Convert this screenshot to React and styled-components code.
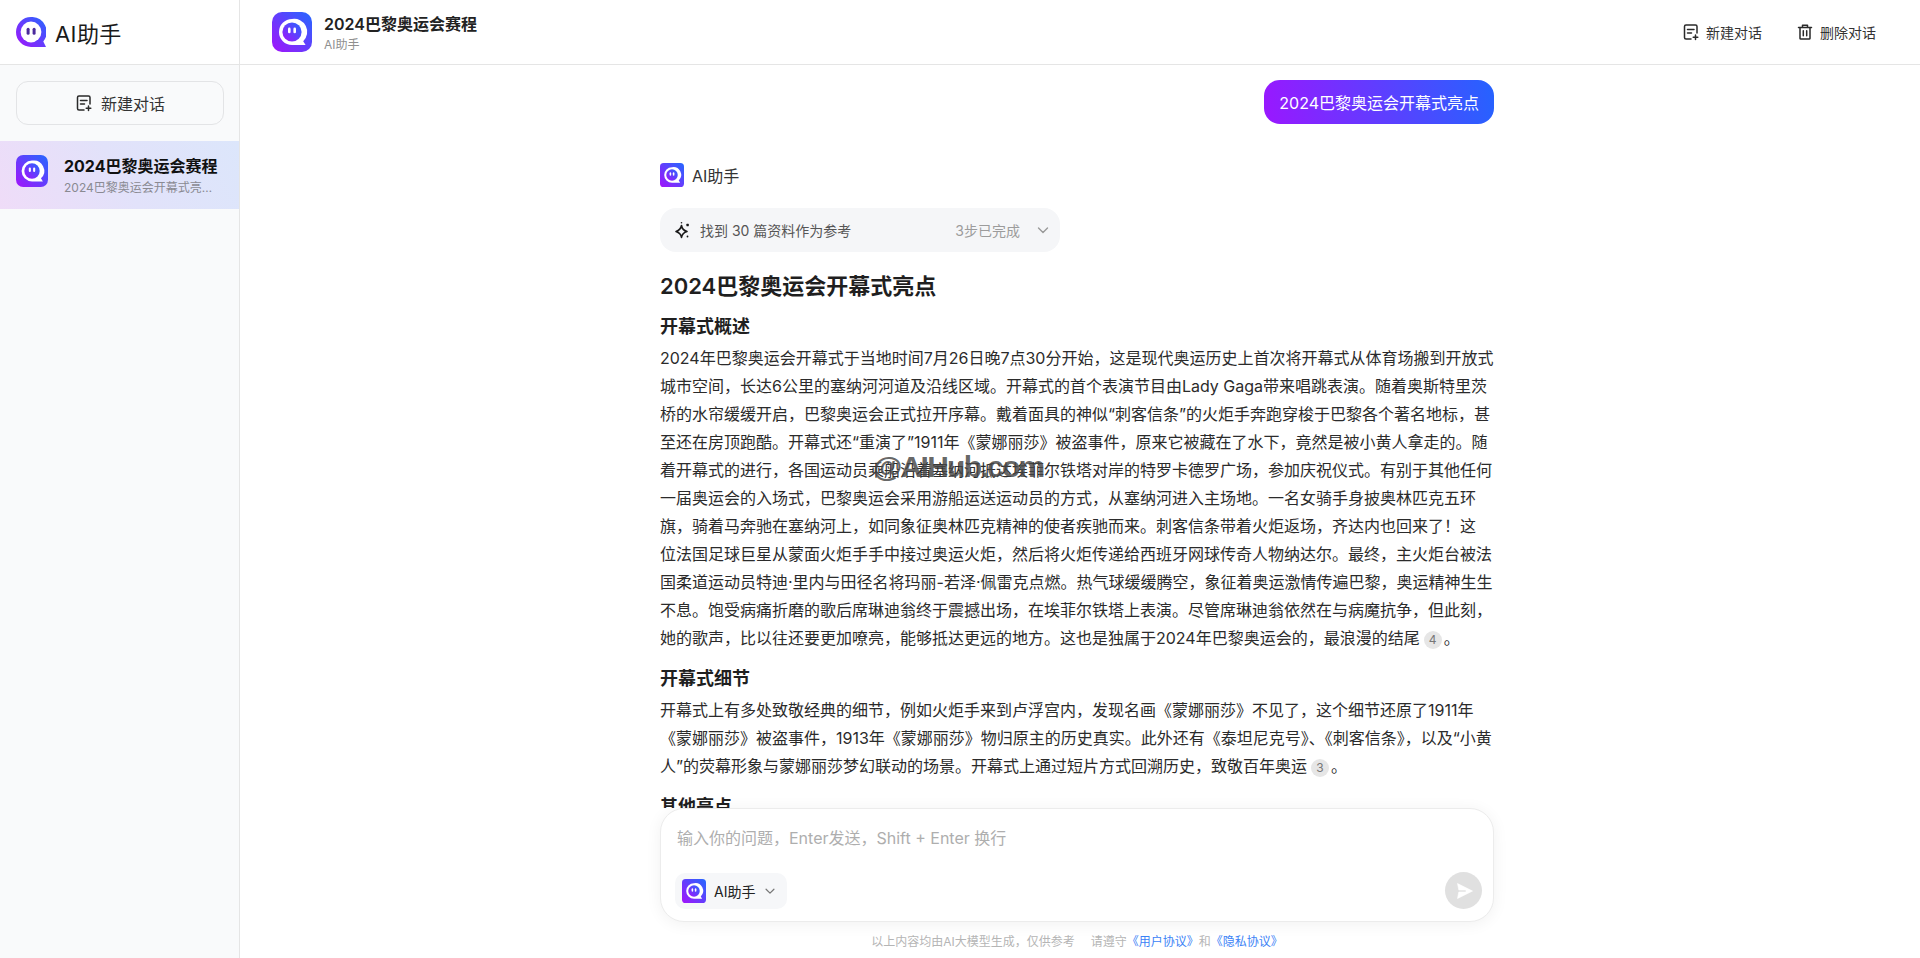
import React from "react";
import styled, { createGlobalStyle } from "styled-components";

const Global = createGlobalStyle`
  html, body { margin: 0; padding: 0; height: 100%; background: #fff; }
  * { box-sizing: border-box; }
  body { font-family: Inter, "Noto Sans CJK SC", "Noto Sans", sans-serif; color: #1f1f1f; }
`;

const Page = styled.div`
  display: flex;
  height: 100vh;
  overflow: hidden;
  position: relative;
`;
const Sidebar = styled.aside`
  width: 240px;
  flex: none;
  background: #f9fafb;
  border-right: 1px solid #e5e5e5;
  display: flex;
  flex-direction: column;
`;
const Brand = styled.div`
  height: 65px;
  flex: none;
  background: #fff;
  border-bottom: 1px solid #e5e5e5;
  display: flex;
  align-items: center;
  gap: 9px;
  padding-left: 16px;
  font-size: 22px;
  letter-spacing: 0.4px;
  color: #1a1a1a;
`;
const NewChat = styled.button`
  margin: 16px;
  height: 44px;
  width: 208px;
  flex: none;
  border: 1px solid #e3e4e6;
  border-radius: 12px;
  background: #f9fafb;
  font: inherit;
  font-size: 16px;
  color: #333;
  display: flex;
  align-items: center;
  justify-content: center;
  gap: 8px;
`;
const SessionItem = styled.div`
  height: 68px;
  padding: 0 16px;
  display: flex;
  align-items: center;
  gap: 16px;
  background: linear-gradient(60deg, #efdcf8 0%, #e2e2fa 50%, #dce6fb 100%);
`;
const SessionIcon = styled.div`
  align-self: flex-start;
  margin-top: 14px;
  display: flex;
`;
const SessionText = styled.div`
  min-width: 0;
  flex: 1;
  display: flex;
  flex-direction: column;
  gap: 2px;
`;
const SessionTitle = styled.div`
  font-size: 16px;
  line-height: 24px;
  font-weight: 700;
  color: #111;
  white-space: nowrap;
`;
const SessionSub = styled.div`
  font-size: 12px;
  line-height: 16px;
  color: #8a8a92;
  width: 149px;
  white-space: nowrap;
  overflow: hidden;
  text-overflow: ellipsis;
`;
const Main = styled.main`
  flex: 1;
  min-width: 0;
  display: flex;
  flex-direction: column;
`;
const Header = styled.header`
  height: 65px;
  flex: none;
  border-bottom: 1px solid #e5e5e5;
  display: flex;
  align-items: center;
  padding: 0 44px 0 32px;
  gap: 12px;
`;
const HeaderText = styled.div`
  flex: 1;
  display: flex;
  flex-direction: column;
`;
const HeaderTitle = styled.div`
  font-size: 16px;
  line-height: 24px;
  font-weight: 600;
  color: #222;
`;
const HeaderSub = styled.div`
  font-size: 12px;
  line-height: 16px;
  margin-top: 1px;
  color: #8f8f8f;
`;
const HeaderAction = styled.div`
  display: flex;
  align-items: center;
  gap: 6px;
  font-size: 14px;
  color: #333;
  margin-left: 22px;
`;
const Scroll = styled.div`
  flex: 1;
  min-height: 0;
  overflow: hidden;
  padding-right: 6px;
`;
const Column = styled.div`
  width: 834px;
  margin: 0 auto;
  display: flex;
  flex-direction: column;
`;
const UserBubble = styled.div`
  align-self: flex-end;
  margin-top: 15px;
  height: 44px;
  padding: 0 15px;
  display: flex;
  align-items: center;
  border-radius: 16px;
  color: #fff;
  font-size: 16px;
  background: linear-gradient(80deg, #9a17ff 0%, #2563ff 100%);
`;
const AgentRow = styled.div`
  display: flex;
  align-items: center;
  gap: 8px;
  margin-top: 39px;
  height: 24px;
  font-size: 16px;
  color: #333;
`;
const RefCard = styled.div`
  width: 400px;
  height: 44px;
  margin-top: 21px;
  border-radius: 16px;
  background: #f5f6f8;
  padding: 0 9px 0 14px;
  display: flex;
  align-items: center;
  gap: 6px;
  font-size: 14px;
  color: #555;
`;
const RefLabel = styled.span`
  flex: 1;
`;
const RefSteps = styled.span`
  color: #9c9c9c;
  margin-right: 9px;
`;
const Title = styled.h1`
  margin: 20px 0 0;
  font-size: 22px;
  line-height: 28px;
  font-weight: 600;
  color: #1f1f1f;
`;
const Heading = styled.h2`
  margin: ${(p) => p.$mt}px 0 0;
  font-size: 18px;
  line-height: 28px;
  font-weight: 600;
  color: #1f1f1f;
`;
const Para = styled.p`
  margin: 3px 0 0;
  font-size: 16px;
  line-height: 28px;
  color: #2b2b2b;
  white-space: nowrap;
`;
const Line = styled.span`
  display: block;
  height: 28px;
`;
const Cite = styled.span`
  display: inline-block;
  width: 18px;
  height: 18px;
  margin: 0 2px 0 4px;
  border-radius: 50%;
  background: #e6e6e6;
  color: #777;
  font-size: 12px;
  line-height: 18px;
  text-align: center;
  vertical-align: 0;
`;
const Composer = styled.div`
  width: 834px;
  height: 114px;
  flex: none;
  margin: 0 auto;
  transform: translateX(-3px);
  border: 1px solid #ececec;
  border-radius: 24px;
  background: #fff;
  box-shadow: 0 2px 16px rgba(0, 0, 0, 0.06);
  padding: 17px 11px 12px 14px;
  display: flex;
  flex-direction: column;
  justify-content: space-between;
  position: relative;
`;
const Placeholder = styled.div`
  font-size: 16px;
  line-height: 24px;
  color: #aeaeae;
  padding-left: 2px;
`;
const ComposerBar = styled.div`
  display: flex;
  align-items: center;
  justify-content: space-between;
`;
const AgentPill = styled.div`
  height: 36px;
  border-radius: 10px;
  background: #f6f7f9;
  padding: 0 10px 0 7px;
  display: flex;
  align-items: center;
  gap: 8px;
  font-size: 14px;
  color: #222;
`;
const Send = styled.div`
  width: 37px;
  height: 37px;
  border-radius: 50%;
  background: #e0e0e0;
  display: flex;
  align-items: center;
  justify-content: center;
`;
const Footer = styled.div`
  height: 36px;
  flex: none;
  padding-right: 6px;
  display: flex;
  align-items: center;
  justify-content: center;
  font-size: 12px;
  color: #b5b5b5;
`;
const Notice = styled.span`
  margin-right: 16px;
`;
const Link = styled.a`
  color: #3b82f6;
`;
const Watermark = styled.div`
  position: absolute;
  left: 873px;
  top: 447px;
  font-family: "Liberation Sans", sans-serif;
  font-size: 30px;
  line-height: 40px;
  letter-spacing: -1.7px;
  font-weight: 700;
  color: rgba(70, 70, 70, 0.82);
  pointer-events: none;
`;

function AppIcon({ size, radius = 10, id }) {
  return (
    <svg width={size} height={size} viewBox="0 0 40 40" style={{ flex: "none" }}>
      <defs>
        <linearGradient id={id} x1="1" y1="0" x2="0" y2="1">
          <stop offset="0" stopColor="#2468ff" />
          <stop offset="1" stopColor="#a313fb" />
        </linearGradient>
      </defs>
      <rect width="40" height="40" rx={radius} fill={`url(#${id})`} />
      <path d="M20 7a13 13 0 1 0 0 26h13.6l-2.4-3.8A13 13 0 0 0 20 7Z" fill="#fff" />
      <circle cx="20" cy="20" r="9.6" fill={`url(#${id})`} />
      <rect x="16" y="15.6" width="2.6" height="5.6" rx="1.3" fill="#fff" />
      <rect x="21.4" y="15.6" width="2.6" height="5.6" rx="1.3" fill="#fff" />
    </svg>
  );
}

function Logo() {
  return (
    <svg width="30" height="30" viewBox="0 0 30 30" style={{ flex: "none" }}>
      <defs>
        <linearGradient id="logoG" x1="1" y1="0" x2="0" y2="1">
          <stop offset="0" stopColor="#2468ff" />
          <stop offset="1" stopColor="#a313fb" />
        </linearGradient>
      </defs>
      <path d="M15 0a15 15 0 1 0 0 30h15l-2.700-5.600A15 15 0 0 0 15 0Z" fill="url(#logoG)" />
      <circle cx="15" cy="15" r="10.400" fill="#fff" />
      <rect x="10.600" y="10.800" width="3" height="7" rx="1.500" fill="#4b2a9c" />
      <rect x="16.600" y="10.800" width="3" height="7" rx="1.500" fill="#4b2a9c" />
    </svg>
  );
}

function NewChatIcon({ size = 18 }) {
  return (
    <svg width={size} height={size} viewBox="0 0 18 18" fill="none" stroke="#2a2a2a" strokeWidth="1.500" strokeLinecap="round" strokeLinejoin="round" style={{ flex: "none" }}>
      <path d="M9 16H4a1.500 1.500 0 0 1-1.500-1.500v-11A1.500 1.500 0 0 1 4 2h9.500A1.500 1.500 0 0 1 15 3.500V10" />
      <path d="M5.500 6.500h6.500M5.500 10h4M13.500 12v4.500M11.200 14.200h4.600" />
    </svg>
  );
}

function TrashIcon() {
  return (
    <svg width="18" height="18" viewBox="0 0 18 18" fill="none" stroke="#2a2a2a" strokeWidth="1.500" strokeLinecap="round" strokeLinejoin="round" style={{ flex: "none" }}>
      <path d="M2.500 4.500h13M6.500 4.500V2.200h5v2.300M4 4.500v10.800a.8.8 0 0 0 .8.7h8.400a.8.8 0 0 0 .8-.7V4.500" />
      <path d="M7.300 7.800v5M10.700 7.800v5" />
    </svg>
  );
}

function Chevron({ color = "#999", size = 16 }) {
  return (
    <svg width={size} height={size} viewBox="0 0 16 16" fill="none" stroke={color} strokeWidth="1.400" strokeLinecap="round" strokeLinejoin="round" style={{ flex: "none" }}>
      <path d="M3.500 6l4.500 4.500L12.500 6" />
    </svg>
  );
}

function SparkIcon() {
  return (
    <svg width="18" height="18" viewBox="0 0 18 18" fill="none" stroke="#1a1a1a" strokeWidth="1.600" strokeLinejoin="round" style={{ flex: "none", marginRight: 2 }}>
      <path d="M7.500 4.500C8 7.500 9.500 9.500 13 10.500 9.500 11.500 8 13 7.500 16.500 7 13 5 11.500 2 10.500 5 9.500 7 7.500 7.500 4.500Z" />
      <rect x="12.400" y="2.800" width="2.400" height="2.400" rx="0.400" fill="#1a1a1a" stroke="none" />
      <circle cx="7.500" cy="1.800" r="0.800" fill="#1a1a1a" stroke="none" />
      <circle cx="13.500" cy="15.500" r="0.900" fill="#1a1a1a" stroke="none" />
    </svg>
  );
}

function SendIcon() {
  return (
    <svg width="20" height="20" viewBox="0 0 20 20" style={{ flex: "none" }}>
      <path d="M3.500 2.500 18.500 10 3.500 17.500 4.800 11H12V9H4.800Z" fill="#fff" stroke="#fff" strokeWidth="0.600" strokeLinejoin="round" />
    </svg>
  );
}

const para1 = [
  "2024年巴黎奥运会开幕式于当地时间7月26日晚7点30分开始，这是现代奥运历史上首次将开幕式从体育场搬到开放式",
  "城市空间，长达6公里的塞纳河河道及沿线区域。开幕式的首个表演节目由Lady Gaga带来唱跳表演。随着奥斯特里茨",
  "桥的水帘缓缓开启，巴黎奥运会正式拉开序幕。戴着面具的神似“刺客信条”的火炬手奔跑穿梭于巴黎各个著名地标，甚",
  "至还在房顶跑酷。开幕式还“重演了”1911年《蒙娜丽莎》被盗事件，原来它被藏在了水下，竟然是被小黄人拿走的。随",
  "着开幕式的进行，各国运动员乘船沿着塞纳河抵达埃菲尔铁塔对岸的特罗卡德罗广场，参加庆祝仪式。有别于其他任何",
  "一届奥运会的入场式，巴黎奥运会采用游船运送运动员的方式，从塞纳河进入主场地。一名女骑手身披奥林匹克五环",
  "旗，骑着马奔驰在塞纳河上，如同象征奥林匹克精神的使者疾驰而来。刺客信条带着火炬返场，齐达内也回来了！这",
  "位法国足球巨星从蒙面火炬手手中接过奥运火炬，然后将火炬传递给西班牙网球传奇人物纳达尔。最终，主火炬台被法",
  "国柔道运动员特迪·里内与田径名将玛丽-若泽·佩雷克点燃。热气球缓缓腾空，象征着奥运激情传遍巴黎，奥运精神生生",
  "不息。饱受病痛折磨的歌后席琳迪翁终于震撼出场，在埃菲尔铁塔上表演。尽管席琳迪翁依然在与病魔抗争，但此刻，",
];
const para1End = "她的歌声，比以往还要更加嘹亮，能够抵达更远的地方。这也是独属于2024年巴黎奥运会的，最浪漫的结尾";
const para2 = [
  "开幕式上有多处致敬经典的细节，例如火炬手来到卢浮宫内，发现名画《蒙娜丽莎》不见了，这个细节还原了1911年",
  "《蒙娜丽莎》被盗事件，1913年《蒙娜丽莎》物归原主的历史真实。此外还有《泰坦尼克号》、《刺客信条》，以及“小黄",
];
const para2End = "人”的荧幕形象与蒙娜丽莎梦幻联动的场景。开幕式上通过短片方式回溯历史，致敬百年奥运";

export default function App() {
  return (
    <Page>
      <Global />
      <Sidebar>
        <Brand>
          <Logo />
          AI助手
        </Brand>
        <NewChat>
          <NewChatIcon />
          新建对话
        </NewChat>
        <SessionItem>
          <SessionIcon>
            <AppIcon size={32} radius={9} id="iconSide" />
          </SessionIcon>
          <SessionText>
            <SessionTitle>2024巴黎奥运会赛程</SessionTitle>
            <SessionSub>2024巴黎奥运会开幕式亮点</SessionSub>
          </SessionText>
        </SessionItem>
      </Sidebar>
      <Main>
        <Header>
          <AppIcon size={40} radius={10} id="iconHead" />
          <HeaderText>
            <HeaderTitle>2024巴黎奥运会赛程</HeaderTitle>
            <HeaderSub>AI助手</HeaderSub>
          </HeaderText>
          <HeaderAction>
            <NewChatIcon />
            新建对话
          </HeaderAction>
          <HeaderAction>
            <TrashIcon />
            删除对话
          </HeaderAction>
        </Header>
        <Scroll>
          <Column>
            <UserBubble>2024巴黎奥运会开幕式亮点</UserBubble>
            <AgentRow>
              <AppIcon size={24} radius={6} id="iconAgent" />
              AI助手
            </AgentRow>
            <RefCard>
              <SparkIcon />
              <RefLabel>找到 30 篇资料作为参考</RefLabel>
              <RefSteps>3步已完成</RefSteps>
              <Chevron />
            </RefCard>
            <Title>2024巴黎奥运会开幕式亮点</Title>
            <Heading $mt={13}>开幕式概述</Heading>
            <Para>
              {para1.map((t) => (
                <Line key={t}>{t}</Line>
              ))}
              <Line>
                {para1End}
                <Cite>4</Cite>。
              </Line>
            </Para>
            <Heading $mt={13}>开幕式细节</Heading>
            <Para>
              {para2.map((t) => (
                <Line key={t}>{t}</Line>
              ))}
              <Line>
                {para2End}
                <Cite>3</Cite>。
              </Line>
            </Para>
            <Heading $mt={13}>其他亮点</Heading>
          </Column>
        </Scroll>
        <Composer>
          <Placeholder>输入你的问题，Enter发送，Shift + Enter 换行</Placeholder>
          <ComposerBar>
            <AgentPill>
              <AppIcon size={24} radius={6} id="iconPill" />
              AI助手
              <Chevron color="#777" size={14} />
            </AgentPill>
            <Send>
              <SendIcon />
            </Send>
          </ComposerBar>
        </Composer>
        <Footer>
          <Notice>以上内容均由AI大模型生成，仅供参考</Notice>
          请遵守<Link>《用户协议》</Link>和<Link>《隐私协议》</Link>
        </Footer>
      </Main>
      <Watermark>@AIHub.com</Watermark>
    </Page>
  );
}
